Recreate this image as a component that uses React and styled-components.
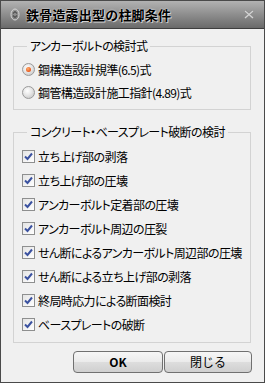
import React from "react";
import styled, { createGlobalStyle } from "styled-components";

const Global = createGlobalStyle`
  html, body { margin: 0; padding: 0; background: #f0f0f0; }
  body { font-family: "Noto Sans CJK JP", "Noto Sans", sans-serif; }
  * { box-sizing: border-box; }
`;

const Window = styled.div`
  width: 265px;
  height: 383px;
  border: 1px solid #4a4a4a;
  background: #f0f0f0;
  display: flex;
  flex-direction: column;
`;

const TitleBar = styled.div`
  height: 28px;
  flex: none;
  display: flex;
  align-items: center;
  padding: 0 10px 0 9px;
  background: linear-gradient(#b2b2b2, #8a8a8a 55%, #6a6a6a);
  border-bottom: 1px solid #3e3e3e;
`;

const Title = styled.div`
  margin-left: 6px;
  flex: 1;
  font-size: 13px;
  font-weight: 700;
  color: #000;
  letter-spacing: 0.2px;
  text-shadow: 0 0 2px rgba(255, 255, 255, 0.9), 1px 1px 0 rgba(230, 230, 230, 0.7);
`;

const Body = styled.div`
  flex: 1;
  display: flex;
  flex-direction: column;
  padding: 9px 12px 9px 12px;
`;

const Group = styled.fieldset`
  margin: ${(p) => p.$top}px 1px 0 0;
  padding: ${(p) => p.$pt}px 0 ${(p) => p.$pb}px 8px;
  border: 1px solid #d3d3d3;
  border-radius: 0;
  display: flex;
  flex-direction: column;
  min-width: 0;
`;

const Legend = styled.legend`
  margin-left: 5px;
  padding: 0 3px;
  font-size: 12px;
  line-height: 16px;
  height: 16px;
  color: #000;
  letter-spacing: -0.6px;
  font-feature-settings: "palt";
`;

const Row = styled.label`
  display: flex;
  align-items: center;
  height: ${(p) => p.$h}px;
  font-size: 12px;
  color: #000;
  white-space: nowrap;
  letter-spacing: -0.6px;
  font-feature-settings: "palt";
`;

const RadioDot = styled.span`
  width: 13px;
  height: 13px;
  border-radius: 50%;
  flex: none;
  margin-right: 3px;
  border: 1px solid #9a9a9a;
  background: radial-gradient(circle at 40% 35%, #ffffff 0%, #e6e6e6 45%, #bdbdbd 100%);
  display: flex;
  align-items: center;
  justify-content: center;
  &::after {
    content: "";
    width: 5px;
    height: 5px;
    border-radius: 50%;
    display: ${(p) => (p.$on ? "block" : "none")};
    background: radial-gradient(circle at 40% 35%, #ffb070, #e8561a 70%, #c8400c);
  }
`;

const CheckBox = styled.span`
  width: 13px;
  height: 13px;
  flex: none;
  margin-right: 3px;
  border: 1px solid #8e8f8f;
  background: linear-gradient(135deg, #e4e4e4, #ffffff);
  display: flex;
  align-items: center;
  justify-content: center;
`;

const Buttons = styled.div`
  margin-top: 8px;
  display: flex;
  justify-content: flex-end;
  gap: 1px;
`;

const Button = styled.button`
  width: ${(p) => p.$w}px;
  height: 22px;
  border: 1px solid #707070;
  border-radius: 4px;
  background: linear-gradient(#f6f6f6 0%, #ebebeb 48%, #dddddd 52%, #cfcfcf 100%);
  font-family: "Noto Sans CJK JP", "Noto Sans", sans-serif;
  font-size: 12px;
  font-weight: ${(p) => (p.$bold ? 700 : 400)};
  color: #000;
  padding: 0;
  line-height: 20px;
`;

const SortIcon = () => (
  <svg width="10" height="13" viewBox="0 0 10 13">
    <ellipse cx="5" cy="6.5" rx="4" ry="5.5" fill="none" stroke="#d8d8d8" strokeWidth="1" />
    <path d="M3 5.5 L5 3.5 L7 5.5 M3 7.5 L5 9.5 L7 7.5" fill="none" stroke="#505050" strokeWidth="1.1" />
  </svg>
);

const CloseX = () => (
  <svg width="10" height="9" viewBox="0 0 10 9">
    <path d="M1 1 L9 8 M9 1 L1 8" stroke="#8a8a8a" strokeWidth="2.4" />
    <path d="M1 1 L9 8 M9 1 L1 8" stroke="#d4d4d4" strokeWidth="1.3" />
  </svg>
);

const Check = () => (
  <svg width="9" height="9" viewBox="0 0 9 9">
    <path d="M1 4.5 L3.5 7 L8 1.5" fill="none" stroke="#3b52a0" strokeWidth="2" />
  </svg>
);

const radios = [
  { label: "鋼構造設計規準(6.5)式", on: true },
  { label: "鋼管構造設計施工指針(4.89)式", on: false },
];

const checks = [
  "立ち上げ部の剥落",
  "立ち上げ部の圧壊",
  "アンカーボルト定着部の圧壊",
  "アンカーボルト周辺の圧裂",
  "せん断によるアンカーボルト周辺部の圧壊",
  "せん断による立ち上げ部の剥落",
  "終局時応力による断面検討",
  "ベースプレートの破断",
];

export default function App() {
  return (
    <>
      <Global />
      <Window>
        <TitleBar>
          <SortIcon />
          <Title>鉄骨造露出型の柱脚条件</Title>
          <CloseX />
        </TitleBar>
        <Body>
          <Group $top={0} $pt={4} $pb={5}>
            <Legend>アンカーボルトの検討式</Legend>
            {radios.map((r) => (
              <Row key={r.label} $h={23}>
                <RadioDot $on={r.on} />
                {r.label}
              </Row>
            ))}
          </Group>
          <Group $top={14} $pt={4} $pb={6}>
            <Legend>コンクリート・ベースプレート破断の検討</Legend>
            {checks.map((c) => (
              <Row key={c} $h={24}>
                <CheckBox>
                  <Check />
                </CheckBox>
                {c}
              </Row>
            ))}
          </Group>
          <Buttons>
            <Button $w={90} $bold>OK</Button>
            <Button $w={88}>閉じる</Button>
          </Buttons>
        </Body>
      </Window>
    </>
  );
}
